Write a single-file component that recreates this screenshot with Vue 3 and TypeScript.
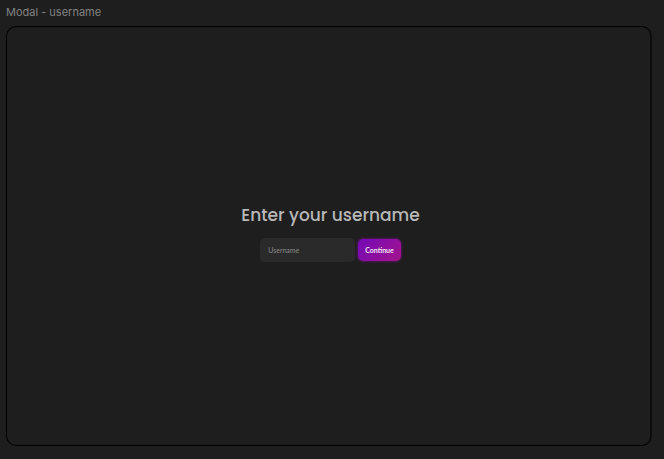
<script setup lang="ts">
import { ref } from 'vue'

const username = ref<string>('')
</script>

<template>
  <div class="canvas">
    <header class="frame-label">Modal - username</header>
    <main class="frame">
      <form class="modal" @submit.prevent>
        <label class="title" for="username">Enter your username</label>
        <div class="controls">
          <input id="username" v-model="username" class="field" type="text" placeholder="Username" />
          <button class="submit" type="submit">Continue</button>
        </div>
      </form>
    </main>
  </div>
</template>

<style>
body {
  background: #1e1e1e;
}
</style>

<style scoped>
.canvas {
  box-sizing: border-box;
  display: flex;
  flex-direction: column;
  min-height: 100vh;
  padding: 4px 12px 13px 6px;
  background: #1e1e1e;
}

.frame-label {
  height: 22px;
  color: #828282;
  font: 400 11px/17px Inter, sans-serif;
}

.frame {
  display: flex;
  flex: 1;
  align-items: center;
  justify-content: center;
  padding: 0 0 8px 4px;
  border: 1px solid #000;
  border-right: 2px solid #0c0c0c;
  border-radius: 10px;
}

.modal {
  display: flex;
  flex-direction: column;
  align-items: center;
  gap: 10px;
}

.title {
  color: #b8b8b8;
  font: 500 17px/26px Poppins, Inter, sans-serif;
}

.controls {
  display: flex;
  align-items: center;
  gap: 3px;
}

.field {
  box-sizing: border-box;
  width: 95px;
  height: 24px;
  padding: 0 8px;
  border: 0;
  border-radius: 5px;
  outline: none;
  background: #2a2a2a;
  color: #b4b4b4;
  font: 400 7px/12px Lato, sans-serif;
}

.field::placeholder {
  color: #8a8a8a;
  opacity: 1;
}

.submit {
  height: 22px;
  padding: 0 7px;
  border: 0;
  border-radius: 5px;
  background: linear-gradient(135deg, #7209b7, #a4148c);
  box-shadow: 0 0 3px #8a109c;
  color: #f2e6f5;
  font: 700 7px/12px Lato, sans-serif;
}
</style>
